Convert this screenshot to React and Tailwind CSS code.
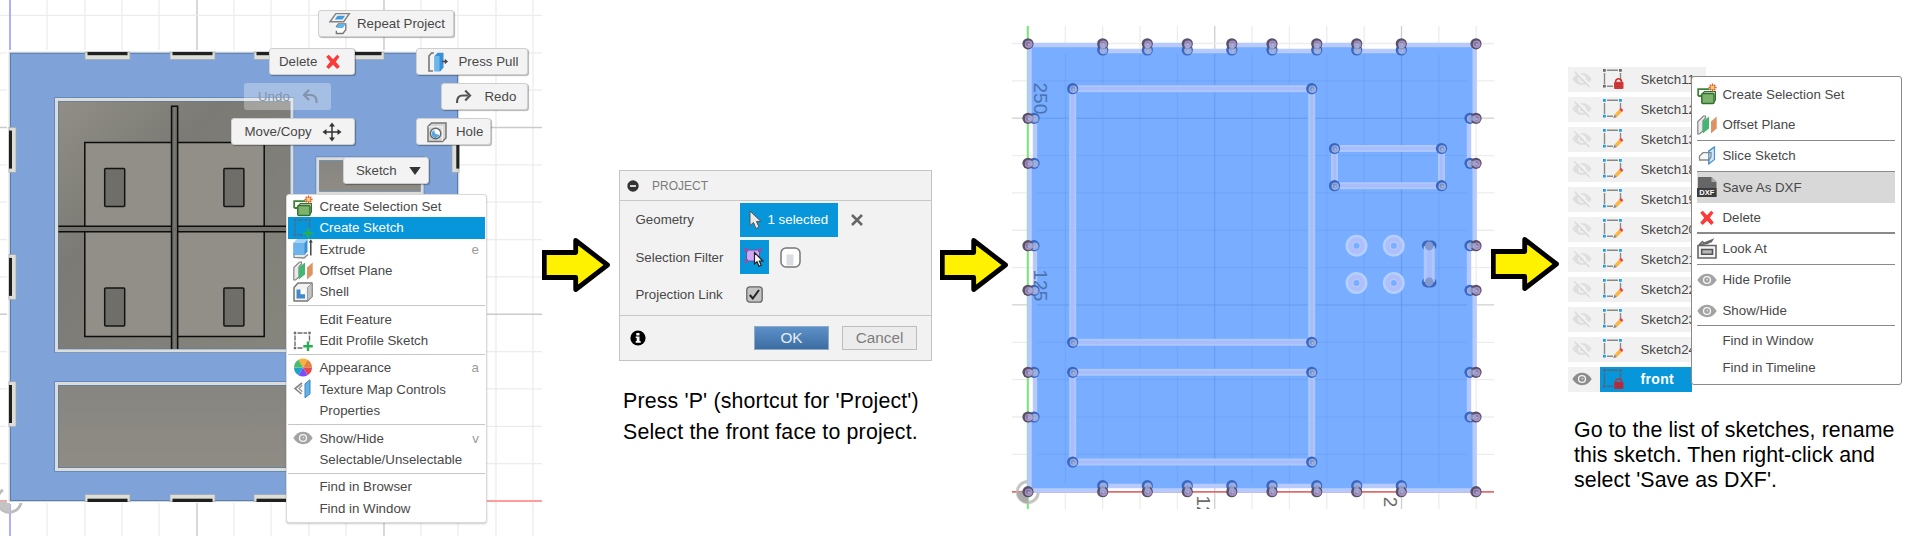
import React from "react";

/* ---------- icons (20x20 grid) ---------- */
const Icon = ({ children, className = "w-5 h-5" }) => (
  <svg viewBox="0 0 20 20" fill="none" className={"shrink-0 overflow-visible " + className}>
    {children}
  </svg>
);

const SelectionSetIcon = () => (
  <Icon>
    <path d="M1.2 11V4.2H12.5M1.2 11H4" stroke="#3d8236" strokeWidth="1.8" />
    <rect x="4.8" y="8.6" width="12.2" height="10" rx="1" fill="#7db36d" stroke="#33702c" strokeWidth="1.5" />
    <path d="M5.5 8.6L7.5 6.6H18.4V15L17 17" stroke="#33702c" strokeWidth="1.2" />
    <path d="M15.5 -1.5V6.5M11.5 2.5H19.5M12.7 -.3L18.3 5.3M18.3 -.3L12.7 5.3" stroke="#e2592b" strokeWidth="1.3" />
    <circle cx="15.5" cy="2.5" r="1.8" fill="#ffd56b" />
  </Icon>
);

const CreateSketchIcon = ({ line = "#6c6c6c" }) => (
  <Icon>
    <path d="M4.5 2H14M2 4.5V15M16.5 4.5V11M4.5 17H10" stroke={line} strokeWidth="1.4" strokeDasharray="5 1" />
    <path d="M.8 .8h2.4v2.4H.8zM15.3 .8h2.4v2.4h-2.4zM.8 15.8h2.4v2.4H.8z" fill={line} />
    <path d="M15 10.5V20M10.3 15.2H19.8" stroke="#27ae55" strokeWidth="2.4" />
  </Icon>
);

const ExtrudeIcon = () => (
  <Icon>
    <path d="M1 14V18.5L11 19L15 15.5" stroke="#8b8b8b" strokeWidth="1.3" fill="#e8e8e8" />
    <path d="M.5 4L4 .5H14.5V12.5L11.5 16H.5Z" fill="#3b92d6" />
    <path d="M.5 4H11.5V16H.5Z" fill="#6db3ec" />
    <path d="M.5 4L4 .5H14.5L11.5 4Z" fill="#a7d3f5" />
    <path d="M17.8 2V16.5" stroke="#444" strokeWidth="1.5" />
    <path d="M15.8 3.5L17.8 0L19.8 3.5Z" fill="#444" />
  </Icon>
);

const OffsetPlaneIcon = () => (
  <Icon>
    <path d="M.8 19V6.5L6.5 1H8.5V3L6 6V16L2.5 19Z" fill="#e9e9e9" stroke="#858585" strokeWidth="1.2" />
    <path d="M5.8 18.5V6.5L12 1.5V13.5Z" fill="#43b673" />
    <path d="M14 18.5V6.5L19.7 1.5V13.5Z" fill="#dc9464" />
  </Icon>
);

const ShellIcon = () => (
  <Icon>
    <path d="M1 5.5L5 1H19V14.5L14.5 19H1Z" fill="#f3f3f3" stroke="#777" strokeWidth="1.5" strokeLinejoin="round" />
    <path d="M14.5 19V5.5L19 1V14.5Z" fill="#c4c4c4" stroke="#8d8d8d" strokeWidth=".8" />
    <path d="M3.5 7.5H12V16H3.5Z" fill="#fff" />
    <path d="M3.5 7.5H7.5V12.3H12V16.5H3.5Z" fill="#4289c9" />
  </Icon>
);

const AppearanceIcon = () => (
  <Icon>
    <path d="M10 9.5L5.5 1.7A9 9 0 0 1 14.5 1.7Z" fill="#fbb03b" />
    <path d="M10 9.5L14.5 1.7A9 9 0 0 1 19 9.5Z" fill="#e2853d" />
    <path d="M10 9.5H19A9 9 0 0 1 14.5 17.3Z" fill="#e5484d" />
    <path d="M10 9.5L14.5 17.3A9 9 0 0 1 5.5 17.3Z" fill="#7a4dff" />
    <path d="M10 9.5L5.5 17.3A9 9 0 0 1 1 9.5Z" fill="#1fa3c4" />
    <path d="M10 9.5H1A9 9 0 0 1 5.5 1.7Z" fill="#4cbb6c" />
  </Icon>
);

const TextureIcon = () => (
  <Icon>
    <path d="M9 4L2 9.5L8.5 15" stroke="#858585" strokeWidth="1.6" />
    <path d="M9.3 6.3L6 9.5L9.3 12.7" stroke="#9a9a9a" strokeWidth="1.3" />
    <path d="M12 4.8L17 .8V14.8L12 18.8Z" fill="#62b2e8" stroke="#3b84bd" strokeWidth="1" />
  </Icon>
);

const EyeIcon = ({ color = "#a3a3a3" }) => (
  <Icon>
    <path d="M.3 10C3 5.6 6.3 3.8 10 3.8S17 5.6 19.7 10C17 14.4 13.7 16.2 10 16.2S3 14.4 .3 10Z" fill={color} />
    <circle cx="10" cy="10" r="4.1" fill="#f6f6f6" />
    <circle cx="10" cy="10" r="2.8" fill={color} />
    <circle cx="10.4" cy="9.6" r=".9" fill="#ddd" />
  </Icon>
);

const EyeOffIcon = () => (
  <Icon>
    <path d="M.3 10C3 5.8 6 4 10 4S17 5.8 19.7 10C17 14.2 14 16 10 16S3 14.2 .3 10Z" fill="#dfdfdf" />
    <circle cx="10" cy="10" r="3.8" fill="#f3f3f3" />
    <circle cx="10" cy="10" r="2.2" fill="#dfdfdf" />
    <path d="M4 1.5L19 17" stroke="#f3f3f3" strokeWidth="2.2" />
    <path d="M2.5 2.5L17.5 18" stroke="#dcdcdc" strokeWidth="1.7" />
  </Icon>
);

const DeleteIcon = () => (
  <Icon>
    <path d="M3.2 4.8L5.8 2.8L10 7.2L14.2 2.8L16.5 4.8L12.8 9.8L16.8 14.5L14.2 17L10 12.7L5.8 17L3.2 14.8L7.2 9.8Z" fill="#fb3a3a" />
  </Icon>
);

const RepeatIcon = () => (
  <Icon className="w-[21px] h-[21px]">
    <path d="M1 8.3L6.5 .6H19.3L14 8.3Z" fill="#f5f5f5" stroke="#828282" strokeWidth="1.4" />
    <path d="M5.5 6.3L8.1 2.6H15.3L12.8 6.3Z" fill="#3f9be0" />
    <path d="M6.8 13.2L9 10.5H16V16L13.2 19.5H7V17" fill="#fff" stroke="#777" strokeWidth="1.3" />
    <path d="M7 14.3L9 10.5H16L13.2 14.3Z" fill="#64b4ee" />
  </Icon>
);

const PressPullIcon = () => (
  <Icon>
    <path d="M5 19H1V4L3.5 1H6" stroke="#777" strokeWidth="1.6" />
    <path d="M6.5 4L9.5 .7H15.5V15.5L12.5 19.3H6.5Z" fill="#3b8fd4" />
    <path d="M6.5 4H11.5V19.3H6.5Z" fill="#6cb6ef" />
    <path d="M14 9.5H18" stroke="#444" strokeWidth="1.5" />
    <path d="M16.8 6.8L20 9.5L16.8 12.2Z" fill="#444" />
  </Icon>
);

const HoleIcon = () => (
  <Icon>
    <path d="M1 4.5L4.5 1H19V16L15.5 19.5H1Z" fill="#d6d6d6" stroke="#777" strokeWidth="1.5" />
    <path d="M1.5 4.8H15.3V19" stroke="#f8f8f8" strokeWidth="1" />
    <circle cx="8.6" cy="11.5" r="5.2" fill="#fff" stroke="#666" strokeWidth="1.4" />
    <path d="M5.8 9A4 4 0 1 0 12.5 12.6C9.5 13 7 11.5 7.5 8Z" fill="#58a7e2" />
  </Icon>
);

const UndoIcon = () => (
  <Icon>
    <path d="M5 8H10C14 8 16 11 15.5 16" stroke="#8393aa" strokeWidth="2.2" />
    <path d="M8 3L3 8L8 13" stroke="#8393aa" strokeWidth="2.2" />
  </Icon>
);

const RedoIcon = () => (
  <Icon>
    <path d="M15 8.5H10C5.5 8.5 3.8 11 4 16" stroke="#555" strokeWidth="2.2" />
    <path d="M12.2 3.5L17 8.5L12.2 13.5" stroke="#555" strokeWidth="2.2" />
  </Icon>
);

const MoveIcon = () => (
  <Icon>
    <path d="M10 2V18M2 10H18" stroke="#333" strokeWidth="1.5" />
    <path d="M10 .5L13 4.5H7ZM10 19.5L7 15.5H13ZM.5 10L4.5 7V13ZM19.5 10L15.5 13V7Z" fill="#333" />
  </Icon>
);

const SliceIcon = () => (
  <Icon>
    <path d="M11.8 5L17.5 1V13.5L11.8 18Z" fill="#cfe6f7" stroke="#4f94cf" strokeWidth="1.2" />
    <path d="M2.5 14V10L6 6.7H14V11L11.5 14Z" stroke="#888" strokeWidth="1.3" fill="#f4f4f4" fillOpacity=".6" />
    <path d="M11.8 18V5L17.5 1" stroke="#4f94cf" strokeWidth="1.2" />
  </Icon>
);

const DxfIcon = () => (
  <svg viewBox="0 0 20 20" className="w-5 h-5 shrink-0 overflow-visible">
    <path d="M1 0H14.5L19.5 5V19.5H1Z" fill="#666" />
    <path d="M14.5 0V5H19.5Z" fill="#aaa" />
    <path d="M0 11H19.5V20H0Z" fill="#3d3d3d" />
    <text x="9.8" y="18.4" textAnchor="middle" fill="#fff" fontSize="7.5" fontWeight="bold" fontFamily="Liberation Sans, sans-serif">DXF</text>
  </svg>
);

const LookAtIcon = () => (
  <Icon>
    <path d="M1 6.5H19V19H1Z" fill="#f4f4f4" stroke="#666" strokeWidth="1.6" />
    <path d="M4.7 10.5H15.5V15.2H4.7Z" fill="#b9b9b9" stroke="#555" strokeWidth="1.6" />
    <path d="M2 5.8L5.5 2.6L6.8 4.2L15.5 .8L13.8 3.3M2 5.8L10 4.5L14 2.5" stroke="#666" strokeWidth="1.4" />
  </Icon>
);

const SketchIcon = ({ locked, dim }) => {
  const dot = locked ? "#6b6b6b" : "#1e9de3";
  const line = dim ? "#4d6880" : "#8a8a82";
  return (
    <Icon>
      <path d="M4 1.3H15M1.5 4V15M17.5 4V12M4 17.2H10" stroke={line} strokeWidth="1.4" />
      <path d="M0 0h2.8v2.8H0zM16 0h2.8v2.8H16zM0 15.8h2.8v2.8H0z" fill={dim ? line : dot} />
      {locked ? (
        <g>
          <path d="M12.7 13V12A3 3 0 0 1 18.5 12V13" stroke={dim ? "#a93a4d" : "#c92c2c"} strokeWidth="1.5" />
          <rect x="11" y="12.7" width="9.5" height="7.3" rx="1" fill={dim ? "#b5303f" : "#d23b3b"} />
          <path d="M12.5 15H19M12.5 17.5H19" stroke={dim ? "#8f2f44" : "#b82f2f"} strokeWidth=".8" />
        </g>
      ) : (
        <g>
          <path d="M11.5 15.5L16.5 10.2L19.2 12.8L14 18Z" fill="#fbb740" />
          <path d="M16.3 10.4L18 8.8L20.3 11.2L18.8 13Z" fill="#ee3f4b" />
          <path d="M11.4 15.5L14 18L10.4 19.2Z" fill="#888" />
        </g>
      )}
    </Icon>
  );
};

const YellowArrow = ({ className }) => (
  <svg viewBox="0 0 69 56" className={"w-[69px] h-14 shrink-0 " + className}>
    <path d="M2.3 15.5H33.7V3.5L65.5 28L33.7 52.5V40.5H2.3Z" fill="#fff200" stroke="#000" strokeWidth="4.8" strokeLinejoin="round" />
    <path d="M0 13H5V18H0ZM0 38H5V43H0Z" fill="#000" />
  </svg>
);

/* ---------- solid model view ---------- */
const STEP = 37.35;
const range = (n) => Array.from({ length: n }, (_, i) => i);

const ModelView = () => (
  <svg viewBox="0 0 542 536" className="block w-[542px] h-[536px]">
    <defs>
      <linearGradient id="wall" x1="0" y1="0" x2="1" y2="1">
        <stop offset="0" stopColor="#918f87" />
        <stop offset=".35" stopColor="#7b7a74" />
        <stop offset="1" stopColor="#86857e" />
      </linearGradient>
      <linearGradient id="floor" x1="0" y1="0" x2="0" y2="1">
        <stop offset="0" stopColor="#868580" />
        <stop offset="1" stopColor="#8f8c84" />
      </linearGradient>
      <linearGradient id="beam">
        <stop offset="0" stopColor="#55554f" />
        <stop offset=".5" stopColor="#7d7d77" />
        <stop offset="1" stopColor="#55554f" />
      </linearGradient>
    </defs>
    {range(14).map((i) => (
      <path key={"v" + i} d={`M${Math.round(10 + (i + 1) * STEP)} 0V536`} stroke={i % 5 === 4 ? "#c4c4c4" : "#ececec"} strokeWidth="1.3" />
    ))}
    {range(13).map((i) => (
      <path key={"h" + i} d={`M0 ${501 - (i + 1) * STEP}H542`} stroke={i % 5 === 4 ? "#cbcbcb" : "#ececec"} strokeWidth="1.3" />
    ))}
    <path d="M10 0V50M10 504V536" stroke="#aeaeff" strokeWidth="2" />
    <path d="M0 501H542" stroke="#ff9c9c" strokeWidth="1.8" />
    <path d="M3 490A12 12 0 1 0 21 503" stroke="#bdbdbd" strokeWidth="3" fill="none" />
    <path d="M0 501H10V512A12 12 0 0 1 0 507Z" fill="#c4c4c4" />
    <rect x="7" y="50" width="453" height="453" fill="#fff" />
    <rect x="9.3" y="52.3" width="449.2" height="449" fill="#7fa3d8" stroke="#d8d8d4" strokeWidth="1.4" />
    <rect x="10.5" y="53.3" width="447" height="447.2" fill="none" stroke="#4f7bb3" strokeWidth=".9" />
    {[85, 170, 254, 339].map((x) => (
      <g key={x}>
        <rect x={x} y="52" width="45" height="7.5" fill="#deded9" stroke="#9ba7b4" strokeWidth=".7" />
        <rect x={x + 2.5} y="52" width="40" height="3.2" fill="#20211f" />
        <rect x={x} y="494.5" width="45" height="7.2" fill="#deded9" stroke="#9ba7b4" strokeWidth=".7" />
        <rect x={x + 2.5} y="498.7" width="40" height="3.3" fill="#20211f" />
      </g>
    ))}
    {[127.3, 254.6, 381.7].map((y) => (
      <g key={y}>
        <rect x="9" y={y} width="7" height="45" fill="#deded9" stroke="#9ba7b4" strokeWidth=".7" />
        <rect x="9" y={y + 3.3} width="3" height="38" fill="#20211f" />
        <rect x="452" y={y} width="7" height="45" fill="#deded9" stroke="#9ba7b4" strokeWidth=".7" />
        <rect x="456.3" y={y + 3.3} width="3" height="38" fill="#20211f" />
      </g>
    ))}
    {[
      [56.5, 99.5, 235.5, 251.3],
      [56.5, 383.5, 235.5, 86],
      [317.7, 158.7, 104.5, 34.5],
    ].map(([x, y, w, h], i) => (
      <g key={i}>
        <rect x={x} y={y} width={w} height={h} fill={i ? "url(#floor)" : "url(#wall)"} stroke="#4f7bb3" strokeWidth="4.2" />
        <rect x={x} y={y} width={w} height={h} fill="none" stroke="#dcdcd8" strokeWidth="3" />
      </g>
    ))}
    <rect x="84.8" y="142.5" width="179.4" height="194" fill="#918f87" stroke="#0d0d0d" strokeWidth="1.5" />
    <rect x="58.5" y="226" width="232" height="6" fill="#72716b" />
    <path d="M58.5 226.3H290M58.5 231.8H290" stroke="#0d0d0d" strokeWidth="1.4" />
    <path d="M171.5 349V106.3H177.7V349" fill="url(#beam)" stroke="#0d0d0d" strokeWidth="1.4" />
    <rect x="172.5" y="227" width="4.5" height="4.1" fill="#6d6c67" />
    {[[104.7, 168.5], [223.9, 168.5], [104.7, 288], [223.9, 288]].map(([x, y]) => (
      <rect key={x + "-" + y} x={x} y={y} width="20" height="38" rx="1" fill="#6f6e68" stroke="#141414" strokeWidth="1.5" />
    ))}
  </svg>
);

const marking =
  "absolute flex items-center rounded-[3px] border border-[#cfcfcf] bg-[#f3f3f3] shadow-[1px_1px_1px_rgba(0,0,0,0.3)] h-[27px] whitespace-nowrap";

const MenuRow = ({ icon, label, hint, active }) => (
  <div className={"flex h-[21.3px] items-center pl-[5px] pr-[6px] " + (active ? "bg-[#0896da] text-white" : "")}>
    <span className="flex w-[26.5px] shrink-0">{icon}</span>
    <span className="grow">{label}</span>
    {hint && <span className="text-[#9a9a9a]">{hint}</span>}
  </div>
);

const Rule = () => (
  <div className="flex h-[6.2px] items-center">
    <div className="h-px w-full bg-[#c6c6c6]" />
  </div>
);

const ModelPanel = () => (
  <section className="relative h-[536px] w-[542px] shrink-0">
    <ModelView />
    <div className={marking + " left-[318px] top-[10px] w-[136px] gap-[7px] pl-[10px]"}>
      <RepeatIcon />
      <span>Repeat Project</span>
    </div>
    <div className={marking + " left-[269px] top-[48px] w-[86px] gap-[6px] pl-[9px]"}>
      <span>Delete</span>
      <DeleteIcon />
    </div>
    <div className="absolute left-[244px] top-[83px] flex h-[27px] w-[87px] items-center gap-[11px] rounded-[3px] bg-white/30 pl-[14px] text-[#8393aa]">
      <span>Undo</span>
      <UndoIcon />
    </div>
    <div className={marking + " left-[231px] top-[118px] w-[124px] gap-[10px] pl-[12.5px]"}>
      <span>Move/Copy</span>
      <MoveIcon />
    </div>
    <div className={marking + " left-[343px] top-[157px] w-[86px] gap-[12px] pl-[12px]"}>
      <span>Sketch</span>
      <svg viewBox="0 0 12 8" className="h-2 w-3"><path d="M.3 0H11.7L6 8Z" fill="#333" /></svg>
    </div>
    <div className={marking + " left-[416px] top-[48px] w-[112px] gap-[11px] pl-[10.5px]"}>
      <PressPullIcon />
      <span>Press Pull</span>
    </div>
    <div className={marking + " left-[441px] top-[83px] w-[87px] gap-[12px] pl-[10.5px]"}>
      <RedoIcon />
      <span>Redo</span>
    </div>
    <div className={marking + " left-[416px] top-[118px] w-[75px] gap-[9px] pl-[10px]"}>
      <HoleIcon />
      <span>Hole</span>
    </div>
    <div className="absolute left-[286px] top-[194px] h-[329px] w-[201px] rounded-[3px] border border-[#d9d9d9] bg-white px-px pt-px shadow-[0_1px_2px_rgba(0,0,0,0.2)]">
      <MenuRow icon={<SelectionSetIcon />} label="Create Selection Set" />
      <MenuRow icon={<CreateSketchIcon line="#46708c" />} label="Create Sketch" active />
      <MenuRow icon={<ExtrudeIcon />} label="Extrude" hint="e" />
      <MenuRow icon={<OffsetPlaneIcon />} label="Offset Plane" />
      <MenuRow icon={<ShellIcon />} label="Shell" />
      <Rule />
      <MenuRow label="Edit Feature" />
      <MenuRow icon={<CreateSketchIcon />} label="Edit Profile Sketch" />
      <Rule />
      <MenuRow icon={<AppearanceIcon />} label="Appearance" hint="a" />
      <MenuRow icon={<TextureIcon />} label="Texture Map Controls" />
      <MenuRow label="Properties" />
      <Rule />
      <MenuRow icon={<EyeIcon />} label="Show/Hide" hint="v" />
      <MenuRow label="Selectable/Unselectable" />
      <Rule />
      <MenuRow label="Find in Browser" />
      <MenuRow label="Find in Window" />
    </div>
  </section>
);

/* ---------- project dialog ---------- */
const ProjectPanel = () => (
  <section className="w-[329px] shrink-0 pl-[8px] pt-[170px]">
    <div className="h-[191px] w-[313px] border border-[#c4c4c4] bg-[#f2f2f2]">
      <div className="flex h-[30px] items-center gap-[13px] border-b border-[#c8c8c8] pl-[7px]">
        <svg viewBox="0 0 12 12" className="h-3 w-3"><circle cx="6" cy="6" r="5.7" fill="#333" /><path d="M3 6H9" stroke="#fff" strokeWidth="1.6" /></svg>
        <span className="text-[12px] text-[#7b7b7b]">PROJECT</span>
      </div>
      <div className="h-[115px] border-b border-[#c8c8c8] pl-[15.5px]">
        <div className="flex h-[37.5px] items-center">
          <span className="w-[104px]">Geometry</span>
          <div className="flex h-[34px] w-[98px] items-center gap-[6px] bg-[#0896da] pl-[9px] text-white">
            <svg viewBox="0 0 13 20" className="h-5 w-[13px]"><path d="M1 1V15.5L4.5 12.5L7 18.5L10 17L7.5 11.5H12Z" fill="#e9e9e9" stroke="#555" strokeWidth="1" /></svg>
            <span>1 selected</span>
          </div>
          <svg viewBox="0 0 12 12" className="ml-[13px] h-3 w-3"><path d="M1 1L11 11M11 1L1 11" stroke="#666" strokeWidth="2.5" /></svg>
        </div>
        <div className="flex h-[37.5px] items-center">
          <span className="w-[104px]">Selection Filter</span>
          <div className="flex h-[34px] w-[29px] items-center justify-center bg-[#0896da]">
            <svg viewBox="0 0 20 20" className="h-5 w-5">
              <rect x="2.5" y="3" width="13" height="11" fill="#cfa6f5" stroke="#63559c" strokeWidth="1" />
              <path d="M0 1h4v4H0zM14 1h4v4h-4zM0 12h4v4H0z" fill="#7a5db0" />
              <path d="M10.5 5.5V17L13 14.8L15 19.3L17.3 18.3L15.3 14H18.8Z" fill="#fff" stroke="#222" strokeWidth="1.2" />
            </svg>
          </div>
          <svg viewBox="0 0 21 21" className="ml-[11px] h-[21px] w-[21px]">
            <rect x="1" y="1" width="19" height="19" rx="5" fill="#fdfdfd" stroke="#777" strokeWidth="1.5" />
            <path d="M6.5 7.5H13.5V18.5H6.5Z" fill="#d9dce1" />
          </svg>
        </div>
        <div className="flex h-[37px] items-center">
          <span className="w-[110px]">Projection Link</span>
          <svg viewBox="0 0 17 17" className="h-[17px] w-[17px]">
            <rect x=".8" y=".8" width="15.4" height="15.4" rx="3" fill="#c3c3c3" stroke="#666" strokeWidth="1.3" />
            <path d="M3.8 9L6.8 12.5L13 4" fill="none" stroke="#222" strokeWidth="2" />
          </svg>
        </div>
      </div>
      <div className="flex h-[44px] items-center pl-[10px] text-[15.3px]">
        <svg viewBox="0 0 16 16" className="h-4 w-4"><circle cx="8" cy="8" r="7.6" fill="#000" /><path d="M6.3 3h3.2v2.4H6.3zM5.7 6.5H9.5V11H10.7V12.7H5.7V11H6.7V8H5.7z" fill="#fff" /></svg>
        <div className="ml-[108px] flex h-6 w-[75px] items-center justify-center border border-[#8fa9c6] bg-linear-to-b from-[#5b90c8] to-[#3d6ea2] text-[#e6eef7]">OK</div>
        <div className="ml-[13px] flex h-6 w-[75px] items-center justify-center border border-[#bdbdbd] bg-[#ececec] text-[#7d7d7d]">Cancel</div>
      </div>
    </div>
    <p className="mt-[24.5px] whitespace-nowrap pl-[4px] text-[21.33px] leading-[31px] tracking-[0.17px] text-black">
      Press 'P' (shortcut for 'Project')
      <br />
      Select the front face to project.
    </p>
  </section>
);

/* ---------- sketch view ---------- */
const TX = [1102.7, 1147.3, 1187.3, 1231.8, 1272, 1316.7, 1356.7, 1401.3];
const SY = [118.3, 163.3, 245.7, 290.3, 372.3, 417];

const outline = (() => {
  let d = "M1029.5 45";
  for (let i = 0; i < 8; i += 2) d += `H${TX[i]}V51H${TX[i + 1]}V45`;
  d += "H1474.7";
  for (let i = 0; i < 6; i += 2) d += `V${SY[i]}H1469V${SY[i + 1]}H1474.7`;
  d += "V490.5";
  for (let i = 6; i >= 0; i -= 2) d += `H${TX[i + 1]}V486H${TX[i]}V490.5`;
  d += "H1029.5";
  for (let i = 4; i >= 0; i -= 2) d += `V${SY[i + 1]}H1035V${SY[i]}H1029.5`;
  return d + "Z";
})();

const Dot = ({ x, y, edge }) => (
  <g>
    <circle cx={x} cy={y} r="5.6" fill={edge ? "#5a5068" : "#3a66c0"} />
    <circle cx={x + 0.7} cy={y + 0.5} r="3.8" fill={edge ? "#a893c4" : "#93afe6"} />
    <circle cx={x + 0.2} cy={y + 0.1} r="2.2" fill={edge ? "#7d7198" : "#7b90c2"} />
    <circle cx={x + 0.8} cy={y + 0.7} r="1" fill="#b8bde0" />
  </g>
);

const Loop = ({ x1, y1, x2, y2 }) => (
  <g>
    <rect x={x1} y={y1} width={x2 - x1} height={y2 - y1} fill="none" stroke="#abc9ff" strokeWidth="7" />
    <rect x={x1} y={y1} width={x2 - x1} height={y2 - y1} fill="none" stroke="#abbcfa" strokeWidth="3.2" />
    {[[x1, y1], [x2, y1], [x1, y2], [x2, y2]].map(([x, y]) => (
      <Dot key={x + "," + y} x={x} y={y} />
    ))}
  </g>
);

const SketchView = () => (
  <svg viewBox="1012 26 482 483" className="ml-[4px] mt-[26px] block h-[483px] w-[482px] shrink-0">
    {range(12).map((i) => (
      <path key={"v" + i} d={`M${1028 + (i + 1) * STEP} 26V509`} stroke={i % 5 === 4 ? "#cfcfcf" : "#ededed"} strokeWidth="1.3" />
    ))}
    {range(12).map((i) => (
      <path key={"h" + i} d={`M1012 ${491.7 - (i + 1) * STEP}H1494`} stroke={i % 5 === 4 ? "#cfcfcf" : "#ededed"} strokeWidth="1.3" />
    ))}
    <path d="M1012 491.8H1494" stroke="#e36b6b" strokeWidth="1.7" />
    <path d="M1027.8 26V509" stroke="#74e874" strokeWidth="2" />
    <circle cx="1027.8" cy="492" r="10.5" fill="none" stroke="#b7b7b7" strokeWidth="3" opacity=".8" />
    <path d="M1027.8 492V503A11 11 0 0 1 1017 492Z" fill="#aaa" />
    <path d={outline} fill="#78adff" stroke="#b5ccff" strokeWidth="4.4" />
    <path d={outline} fill="none" stroke="#bcc6fc" strokeWidth="1.4" />
    {range(11).map((i) => (
      <path key={"iv" + i} d={`M${1028 + (i + 1) * STEP} 54V483`} stroke="#5f94ee" strokeWidth="1.1" opacity={i % 5 === 4 ? ".75" : ".3"} />
    ))}
    {range(11).map((i) => (
      <path key={"ih" + i} d={`M1037 ${491.7 - (i + 1) * STEP}H1467`} stroke="#5f94ee" strokeWidth="1.1" opacity={i % 5 === 4 ? ".75" : ".3"} />
    ))}
    <g fontFamily="Liberation Sans, sans-serif" fontSize="19">
      <text transform="translate(1034.3 82.5) rotate(90)" fill="#4b72b0">250</text>
      <text transform="translate(1034.3 269.5) rotate(90)" fill="#4b72b0">125</text>
      <text transform="translate(1197 495.5) rotate(90)" fill="#6b6b6b">12</text>
      <text transform="translate(1383.5 496.8) rotate(90)" fill="#6b6b6b">2</text>
    </g>
    {TX.map((x) => (
      <g key={x}>
        <Dot x={x} y={50} />
        <Dot x={x} y={43.8} edge />
        <Dot x={x} y={485.7} />
        <Dot x={x} y={491.7} edge />
        <path d={`M${x} 45V50.5M${x} 485.5V490.5`} stroke="#a5b5e6" strokeWidth="5" strokeLinecap="round" opacity=".7" />
      </g>
    ))}
    {SY.map((y) => (
      <g key={y}>
        <Dot x={1034} y={y} />
        <Dot x={1028} y={y} edge />
        <Dot x={1470} y={y} />
        <Dot x={1476} y={y} edge />
        <path d={`M1030 ${y}H1034.5M1469.5 ${y}H1474`} stroke="#a5b5e6" strokeWidth="5" strokeLinecap="round" opacity=".65" />
      </g>
    ))}
    {[[1028, 43.8], [1476, 43.8], [1028, 491.7], [1476, 491.7]].map(([x, y]) => (
      <Dot key={x + "," + y} x={x} y={y} edge />
    ))}
    <Loop x1={1072.7} y1={88.7} x2={1311.7} y2={342.3} />
    <Loop x1={1072.7} y1={372.3} x2={1311.7} y2={462} />
    <Loop x1={1334.5} y1={148.5} x2={1441.5} y2={185.7} />
    {[[1356.5, 245.7], [1393.8, 245.7], [1356.5, 283], [1393.8, 283]].map(([x, y]) => (
      <g key={x + "," + y}>
        <circle cx={x} cy={y} r="7" fill="none" stroke="#b3d0ff" strokeWidth="8" />
        <circle cx={x} cy={y} r="6.2" fill="none" stroke="#b0bffb" strokeWidth="4.5" />
      </g>
    ))}
    <rect x="1422" y="240.5" width="14.5" height="10" rx="5" fill="#3a66c0" />
    <rect x="1422" y="277.5" width="14.5" height="10" rx="5" fill="#3a66c0" />
    <path d="M1429.3 246V282" stroke="#abc9ff" strokeWidth="11" />
    <path d="M1429.3 246V282" stroke="#abbcfa" strokeWidth="5" />
    <circle cx="1429.2" cy="246" r="4.4" fill="#8199cf" />
    <circle cx="1429.2" cy="282" r="4.4" fill="#8199cf" />
  </svg>
);

/* ---------- sketch list ---------- */
const sketches = ["11", "12", "13", "18", "19", "20", "21", "22", "23", "24"];

const CtxRow = ({ icon, label, className = "h-[30px]" }) => (
  <div className={"flex items-center " + className}>
    <span className="flex w-[25.5px] shrink-0">{icon}</span>
    <span>{label}</span>
  </div>
);

const CtxRule = () => <div className="my-[-0.5px] h-[1.4px] bg-[#8a8a8a]" />;

const ListPanel = () => (
  <section className="relative grow pl-[8px] pt-[66.7px]">
    <div className="flex w-[138px] flex-col gap-[5px]">
      {sketches.map((n, i) => (
        <div key={n} className={"flex h-[25px] items-center bg-[#f1f1f1] pl-[4px] " + (i ? "w-[130px]" : "")}>
          <EyeOffIcon />
          <span className="ml-[11px] flex"><SketchIcon locked={i === 0} /></span>
          <span className="ml-[17.5px]">Sketch{n}</span>
        </div>
      ))}
      <div className="flex h-[25px] w-[124px] items-center bg-[#f1f1f1] pl-[4px]">
        <EyeIcon color="#8d8d8d" />
        <div className="ml-[7.5px] flex h-full grow items-center bg-[#0896da] pl-[3.5px] font-bold text-white">
          <SketchIcon locked dim />
          <span className="ml-[17.5px] text-[14px] tracking-[0.35px]">front</span>
        </div>
      </div>
    </div>
    <div className="absolute left-[131px] top-[76px] h-[309px] w-[211px] rounded-[3px] border border-[#8a8a8a] bg-white pl-[5px] pr-[6px] pt-[3px]">
      <CtxRow icon={<SelectionSetIcon />} label="Create Selection Set" />
      <CtxRow icon={<OffsetPlaneIcon />} label="Offset Plane" />
      <CtxRule />
      <CtxRow icon={<SliceIcon />} label="Slice Sketch" className="h-[31px]" />
      <CtxRule />
      <CtxRow icon={<DxfIcon />} label="Save As DXF" className="h-[31px] bg-[#d8d8d8]" />
      <CtxRow icon={<DeleteIcon />} label="Delete" className="h-[30px]" />
      <CtxRule />
      <CtxRow icon={<LookAtIcon />} label="Look At" className="h-[31px]" />
      <CtxRule />
      <CtxRow icon={<EyeIcon />} label="Hide Profile" className="h-[31px]" />
      <CtxRow icon={<EyeIcon />} label="Show/Hide" className="h-[30px]" />
      <CtxRule />
      <CtxRow label="Find in Window" className="h-[29px]" />
      <CtxRow label="Find in Timeline" className="h-[26px]" />
    </div>
    <p className="mt-[26.5px] whitespace-nowrap pl-[6px] text-[21.33px] leading-[25px] tracking-[0.08px] text-black">
      Go to the list of sketches, rename
      <br />
      this sketch. Then right-click and
      <br />
      select 'Save as DXF'.
    </p>
  </section>
);

export default function App() {
  return (
    <main className="flex h-[536px] w-[1914px] items-start overflow-hidden bg-white font-['Liberation_Sans',Arial,sans-serif] text-[13.3px] leading-none text-[#484848]">
      <ModelPanel />
      <YellowArrow className="mt-[237px]" />
      <ProjectPanel />
      <YellowArrow className="mt-[237px] -mr-px" />
      <SketchView />
      <YellowArrow className="-ml-[3px] mt-[236px]" />
      <ListPanel />
    </main>
  );
}
